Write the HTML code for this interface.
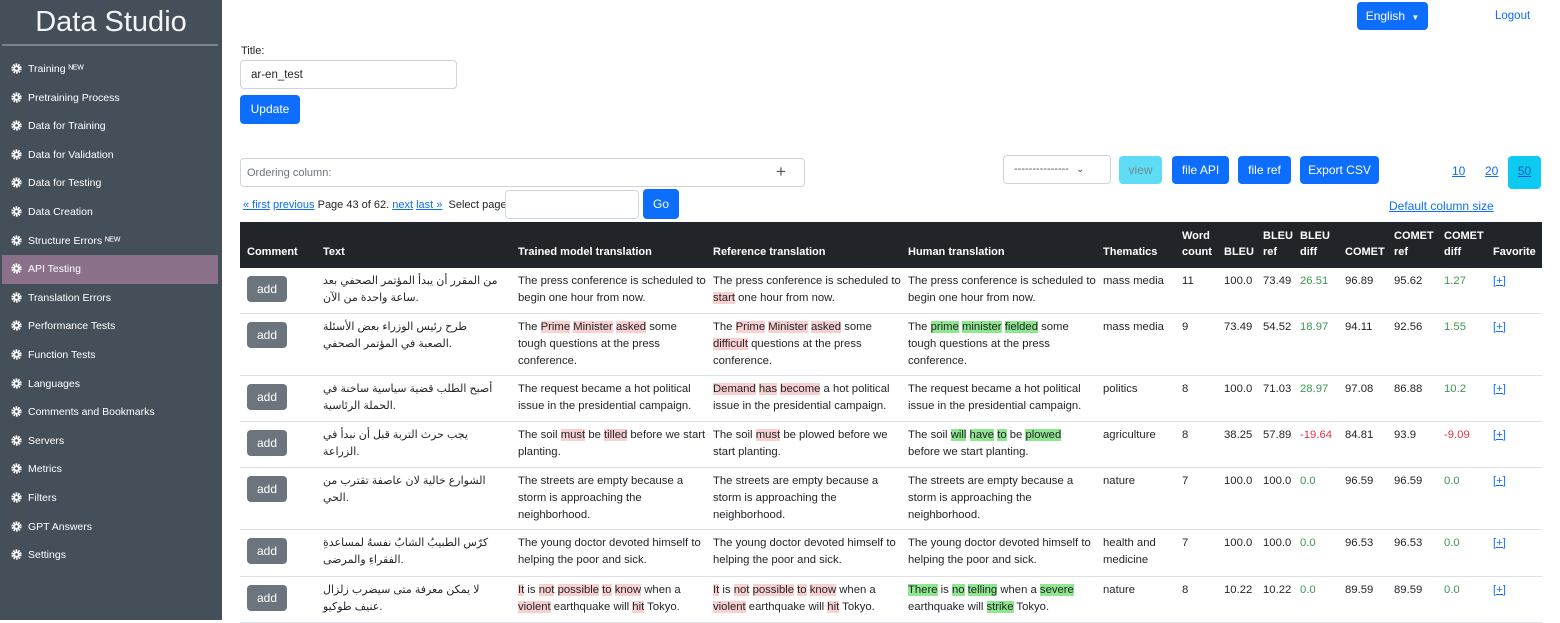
<!DOCTYPE html>
<html><head><meta charset="utf-8"><style>
*{box-sizing:border-box;margin:0;padding:0}
body{width:1560px;height:620px;overflow:hidden;font-family:"Liberation Sans",sans-serif;font-size:11.5px;color:#212529;background:#fff;position:relative}
.sb{position:absolute;left:0;top:0;width:222px;height:620px;background:#454f59;color:#fff}
.sb h1{font-weight:normal;font-size:29px;text-align:center;padding-top:6px;height:44px;color:#f4f4f4}
.sb hr{border:0;border-top:2px solid #7a828a;margin:0 4px 0 2px}
.sb ul{list-style:none;margin-top:9px}
.sb li{height:28.6px;line-height:28.6px;padding-left:9px;font-size:10.5px;margin:0 4px 0 2px}
.sb li.act{background:#8a7088}
.sb li svg{vertical-align:-2px;margin-right:6px}
.btn{position:absolute;background:#0d6efd;color:#fff;border-radius:4px;text-align:center;font-size:12px}
a{color:#0d6efd;text-decoration:underline}
.in{position:absolute;border:1px solid #ced4da;border-radius:4px;background:#fff}
table{position:absolute;left:240px;top:222px;width:1302px;border-collapse:collapse;table-layout:fixed}
th{background:#212529;color:#fff;text-align:left;font-size:11px;height:46px;padding:0 0 0 7px;vertical-align:bottom;padding-bottom:8px;line-height:16px}
td{vertical-align:top;padding:5px 0 5px 7px;line-height:17px;border-bottom:1px solid #dee2e6;font-size:11.3px}
.add{display:inline-block;background:#6c757d;color:#fff;width:40px;height:26px;line-height:26px;text-align:center;border-radius:4px;font-size:12px;margin-top:3px}
.r{background:#f8d0d0}.g{background:#8fe68f}
.gr{color:#3a9a50}.rd{color:#dc3545}
.ar{text-align:left;padding-right:12px;font-size:11px;font-family:"Liberation Sans","DejaVu Sans",sans-serif}
</style></head><body>
<div class="sb"><h1>Data Studio</h1><hr><ul>
<li><svg width="11" height="11" viewBox="0 0 16 16"><circle cx="8" cy="8" r="5.5" fill="none" stroke="#fff" stroke-width="4" stroke-dasharray="2.2 1.3"/><circle cx="8" cy="8" r="4.5" fill="#fff"/><circle cx="8" cy="8" r="2" fill="#454f59"/></svg>Training ᴺᴱᵂ</li>
<li><svg width="11" height="11" viewBox="0 0 16 16"><circle cx="8" cy="8" r="5.5" fill="none" stroke="#fff" stroke-width="4" stroke-dasharray="2.2 1.3"/><circle cx="8" cy="8" r="4.5" fill="#fff"/><circle cx="8" cy="8" r="2" fill="#454f59"/></svg>Pretraining Process</li>
<li><svg width="11" height="11" viewBox="0 0 16 16"><circle cx="8" cy="8" r="5.5" fill="none" stroke="#fff" stroke-width="4" stroke-dasharray="2.2 1.3"/><circle cx="8" cy="8" r="4.5" fill="#fff"/><circle cx="8" cy="8" r="2" fill="#454f59"/></svg>Data for Training</li>
<li><svg width="11" height="11" viewBox="0 0 16 16"><circle cx="8" cy="8" r="5.5" fill="none" stroke="#fff" stroke-width="4" stroke-dasharray="2.2 1.3"/><circle cx="8" cy="8" r="4.5" fill="#fff"/><circle cx="8" cy="8" r="2" fill="#454f59"/></svg>Data for Validation</li>
<li><svg width="11" height="11" viewBox="0 0 16 16"><circle cx="8" cy="8" r="5.5" fill="none" stroke="#fff" stroke-width="4" stroke-dasharray="2.2 1.3"/><circle cx="8" cy="8" r="4.5" fill="#fff"/><circle cx="8" cy="8" r="2" fill="#454f59"/></svg>Data for Testing</li>
<li><svg width="11" height="11" viewBox="0 0 16 16"><circle cx="8" cy="8" r="5.5" fill="none" stroke="#fff" stroke-width="4" stroke-dasharray="2.2 1.3"/><circle cx="8" cy="8" r="4.5" fill="#fff"/><circle cx="8" cy="8" r="2" fill="#454f59"/></svg>Data Creation</li>
<li><svg width="11" height="11" viewBox="0 0 16 16"><circle cx="8" cy="8" r="5.5" fill="none" stroke="#fff" stroke-width="4" stroke-dasharray="2.2 1.3"/><circle cx="8" cy="8" r="4.5" fill="#fff"/><circle cx="8" cy="8" r="2" fill="#454f59"/></svg>Structure Errors ᴺᴱᵂ</li>
<li class="act"><svg width="11" height="11" viewBox="0 0 16 16"><circle cx="8" cy="8" r="5.5" fill="none" stroke="#fff" stroke-width="4" stroke-dasharray="2.2 1.3"/><circle cx="8" cy="8" r="4.5" fill="#fff"/><circle cx="8" cy="8" r="2" fill="#8a7088"/></svg>API Testing</li>
<li><svg width="11" height="11" viewBox="0 0 16 16"><circle cx="8" cy="8" r="5.5" fill="none" stroke="#fff" stroke-width="4" stroke-dasharray="2.2 1.3"/><circle cx="8" cy="8" r="4.5" fill="#fff"/><circle cx="8" cy="8" r="2" fill="#454f59"/></svg>Translation Errors</li>
<li><svg width="11" height="11" viewBox="0 0 16 16"><circle cx="8" cy="8" r="5.5" fill="none" stroke="#fff" stroke-width="4" stroke-dasharray="2.2 1.3"/><circle cx="8" cy="8" r="4.5" fill="#fff"/><circle cx="8" cy="8" r="2" fill="#454f59"/></svg>Performance Tests</li>
<li><svg width="11" height="11" viewBox="0 0 16 16"><circle cx="8" cy="8" r="5.5" fill="none" stroke="#fff" stroke-width="4" stroke-dasharray="2.2 1.3"/><circle cx="8" cy="8" r="4.5" fill="#fff"/><circle cx="8" cy="8" r="2" fill="#454f59"/></svg>Function Tests</li>
<li><svg width="11" height="11" viewBox="0 0 16 16"><circle cx="8" cy="8" r="5.5" fill="none" stroke="#fff" stroke-width="4" stroke-dasharray="2.2 1.3"/><circle cx="8" cy="8" r="4.5" fill="#fff"/><circle cx="8" cy="8" r="2" fill="#454f59"/></svg>Languages</li>
<li><svg width="11" height="11" viewBox="0 0 16 16"><circle cx="8" cy="8" r="5.5" fill="none" stroke="#fff" stroke-width="4" stroke-dasharray="2.2 1.3"/><circle cx="8" cy="8" r="4.5" fill="#fff"/><circle cx="8" cy="8" r="2" fill="#454f59"/></svg>Comments and Bookmarks</li>
<li><svg width="11" height="11" viewBox="0 0 16 16"><circle cx="8" cy="8" r="5.5" fill="none" stroke="#fff" stroke-width="4" stroke-dasharray="2.2 1.3"/><circle cx="8" cy="8" r="4.5" fill="#fff"/><circle cx="8" cy="8" r="2" fill="#454f59"/></svg>Servers</li>
<li><svg width="11" height="11" viewBox="0 0 16 16"><circle cx="8" cy="8" r="5.5" fill="none" stroke="#fff" stroke-width="4" stroke-dasharray="2.2 1.3"/><circle cx="8" cy="8" r="4.5" fill="#fff"/><circle cx="8" cy="8" r="2" fill="#454f59"/></svg>Metrics</li>
<li><svg width="11" height="11" viewBox="0 0 16 16"><circle cx="8" cy="8" r="5.5" fill="none" stroke="#fff" stroke-width="4" stroke-dasharray="2.2 1.3"/><circle cx="8" cy="8" r="4.5" fill="#fff"/><circle cx="8" cy="8" r="2" fill="#454f59"/></svg>Filters</li>
<li><svg width="11" height="11" viewBox="0 0 16 16"><circle cx="8" cy="8" r="5.5" fill="none" stroke="#fff" stroke-width="4" stroke-dasharray="2.2 1.3"/><circle cx="8" cy="8" r="4.5" fill="#fff"/><circle cx="8" cy="8" r="2" fill="#454f59"/></svg>GPT Answers</li>
<li><svg width="11" height="11" viewBox="0 0 16 16"><circle cx="8" cy="8" r="5.5" fill="none" stroke="#fff" stroke-width="4" stroke-dasharray="2.2 1.3"/><circle cx="8" cy="8" r="4.5" fill="#fff"/><circle cx="8" cy="8" r="2" fill="#454f59"/></svg>Settings</li>
</ul></div>

<div class="btn" style="left:1357px;top:2px;width:71px;height:28px;line-height:28px">English <span style="font-size:8px;margin-left:3px">▼</span></div>
<a style="position:absolute;left:1495px;top:10px;text-decoration:none;font-size:11.5px">Logout</a>

<div style="position:absolute;left:241px;top:45px;font-size:11px">Title:</div>
<div class="in" style="left:240px;top:60px;width:217px;height:29px;padding:8px 0 0 10px;font-size:11.5px">ar-en_test</div>
<div class="btn" style="left:240px;top:95px;width:60px;height:29px;line-height:29px">Update</div>

<div class="in" style="left:240px;top:158px;width:565px;height:29px;padding:8px 0 0 6px;font-size:11px;color:#6c757d">Ordering column:<span style="position:absolute;left:535px;top:3px;font-size:17px;color:#555">+</span></div>
<div style="position:absolute;left:243px;top:199px;font-size:11px"><a>« first</a> <a>previous</a> Page 43 of 62. <a>next</a> <a>last »</a> &nbsp;Select page:</div>
<div class="in" style="left:505px;top:190px;width:134px;height:29px"></div>
<div class="btn" style="left:643px;top:189px;width:36px;height:30px;line-height:30px">Go</div>

<div class="in" style="left:1003px;top:155px;width:108px;height:29px;padding:7px 0 0 10px;color:#555;font-size:11px">--------------- <span style="font-size:10px;margin-left:4px">⌄</span></div>
<div class="btn" style="left:1119px;top:156px;width:43px;height:28px;line-height:28px;background:#5fdcf5;color:#6c8a90">view</div>
<div class="btn" style="left:1172px;top:156px;width:57px;height:28px;line-height:28px">file API</div>
<div class="btn" style="left:1238px;top:156px;width:53px;height:28px;line-height:28px">file ref</div>
<div class="btn" style="left:1300px;top:156px;width:79px;height:28px;line-height:28px">Export CSV</div>
<a style="position:absolute;left:1452px;top:164px;font-size:12px">10</a>
<a style="position:absolute;left:1485px;top:164px;font-size:12px">20</a>
<div style="position:absolute;left:1508px;top:156px;width:33px;height:33px;background:#0dcaf0;border-radius:4px;text-align:center;line-height:30px"><a style="font-size:12px;color:#0a58ca">50</a></div>
<a style="position:absolute;left:1389px;top:199px;font-size:12px">Default column size</a>

<table>
<colgroup><col style="width:76px"><col style="width:195px"><col style="width:195px"><col style="width:195px"><col style="width:195px"><col style="width:79px"><col style="width:42px"><col style="width:39px"><col style="width:37px"><col style="width:45px"><col style="width:49px"><col style="width:50px"><col style="width:49px"><col style="width:56px"></colgroup>
<tr><th>Comment</th><th>Text</th><th>Trained model translation</th><th>Reference translation</th><th>Human translation</th><th>Thematics</th><th>Word count</th><th>BLEU</th><th>BLEU ref</th><th>BLEU diff</th><th>COMET</th><th>COMET ref</th><th>COMET diff</th><th>Favorite</th></tr>
<tr style="height:45px"><td><span class="add">add</span></td><td class="ar">من المقرر أن يبدأ المؤتمر الصحفي بعد ساعة واحدة من الآن.</td><td>The press conference is scheduled to begin one hour from now.</td><td>The press conference is scheduled to <span class="r">start</span> one hour from now.</td><td>The press conference is scheduled to begin one hour from now.</td><td>mass media</td><td>11</td><td>100.0</td><td>73.49</td><td class="gr">26.51</td><td>96.89</td><td>95.62</td><td class="gr">1.27</td><td><a>[+]</a></td></tr>
<tr style="height:62px"><td><span class="add">add</span></td><td class="ar">طرح رئيس الوزراء بعض الأسئلة الصعبة في المؤتمر الصحفي.</td><td>The <span class="r">Prime</span> <span class="r">Minister</span> <span class="r">asked</span> some tough questions at the press conference.</td><td>The <span class="r">Prime</span> <span class="r">Minister</span> <span class="r">asked</span> some <span class="r">difficult</span> questions at the press conference.</td><td>The <span class="g">prime</span> <span class="g">minister</span> <span class="g">fielded</span> some tough questions at the press conference.</td><td>mass media</td><td>9</td><td>73.49</td><td>54.52</td><td class="gr">18.97</td><td>94.11</td><td>92.56</td><td class="gr">1.55</td><td><a>[+]</a></td></tr>
<tr style="height:46px"><td><span class="add">add</span></td><td class="ar">أصبح الطلب قضية سياسية ساخنة في الحملة الرئاسية.</td><td>The request became a hot political issue in the presidential campaign.</td><td><span class="r">Demand</span> <span class="r">has</span> <span class="r">become</span> a hot political issue in the presidential campaign.</td><td>The request became a hot political issue in the presidential campaign.</td><td>politics</td><td>8</td><td>100.0</td><td>71.03</td><td class="gr">28.97</td><td>97.08</td><td>86.88</td><td class="gr">10.2</td><td><a>[+]</a></td></tr>
<tr style="height:46px"><td><span class="add">add</span></td><td class="ar">يجب حرث التربة قبل أن نبدأ في الزراعة.</td><td>The soil <span class="r">must</span> be <span class="r">tilled</span> before we start planting.</td><td>The soil <span class="r">must</span> be plowed before we start planting.</td><td>The soil <span class="g">will</span> <span class="g">have</span> <span class="g">to</span> be <span class="g">plowed</span> before we start planting.</td><td>agriculture</td><td>8</td><td>38.25</td><td>57.89</td><td class="rd">-19.64</td><td>84.81</td><td>93.9</td><td class="rd">-9.09</td><td><a>[+]</a></td></tr>
<tr style="height:61px"><td><span class="add">add</span></td><td class="ar">الشوارع خالية لان عاصفة تقترب من الحي.</td><td>The streets are empty because a storm is approaching the neighborhood.</td><td>The streets are empty because a storm is approaching the neighborhood.</td><td>The streets are empty because a storm is approaching the neighborhood.</td><td>nature</td><td>7</td><td>100.0</td><td>100.0</td><td class="gr">0.0</td><td>96.59</td><td>96.59</td><td class="gr">0.0</td><td><a>[+]</a></td></tr>
<tr style="height:47px"><td><span class="add">add</span></td><td class="ar">كرّس الطبيبُ الشابُ نفسهُ لمساعدةِ الفقراءِ والمرضى.</td><td>The young doctor devoted himself to helping the poor and sick.</td><td>The young doctor devoted himself to helping the poor and sick.</td><td>The young doctor devoted himself to helping the poor and sick.</td><td>health and medicine</td><td>7</td><td>100.0</td><td>100.0</td><td class="gr">0.0</td><td>96.53</td><td>96.53</td><td class="gr">0.0</td><td><a>[+]</a></td></tr>
<tr style="height:46px"><td><span class="add">add</span></td><td class="ar">لا يمكن معرفة متى سيضرب زلزال عنيف طوكيو.</td><td><span class="r">It</span> is <span class="r">not</span> <span class="r">possible</span> <span class="r">to</span> <span class="r">know</span> when a <span class="r">violent</span> earthquake will <span class="r">hit</span> Tokyo.</td><td><span class="r">It</span> is <span class="r">not</span> <span class="r">possible</span> <span class="r">to</span> <span class="r">know</span> when a <span class="r">violent</span> earthquake will <span class="r">hit</span> Tokyo.</td><td><span class="g">There</span> is <span class="g">no</span> <span class="g">telling</span> when a <span class="g">severe</span> earthquake will <span class="g">strike</span> Tokyo.</td><td>nature</td><td>8</td><td>10.22</td><td>10.22</td><td class="gr">0.0</td><td>89.59</td><td>89.59</td><td class="gr">0.0</td><td><a>[+]</a></td></tr>
</table>
</body></html>
